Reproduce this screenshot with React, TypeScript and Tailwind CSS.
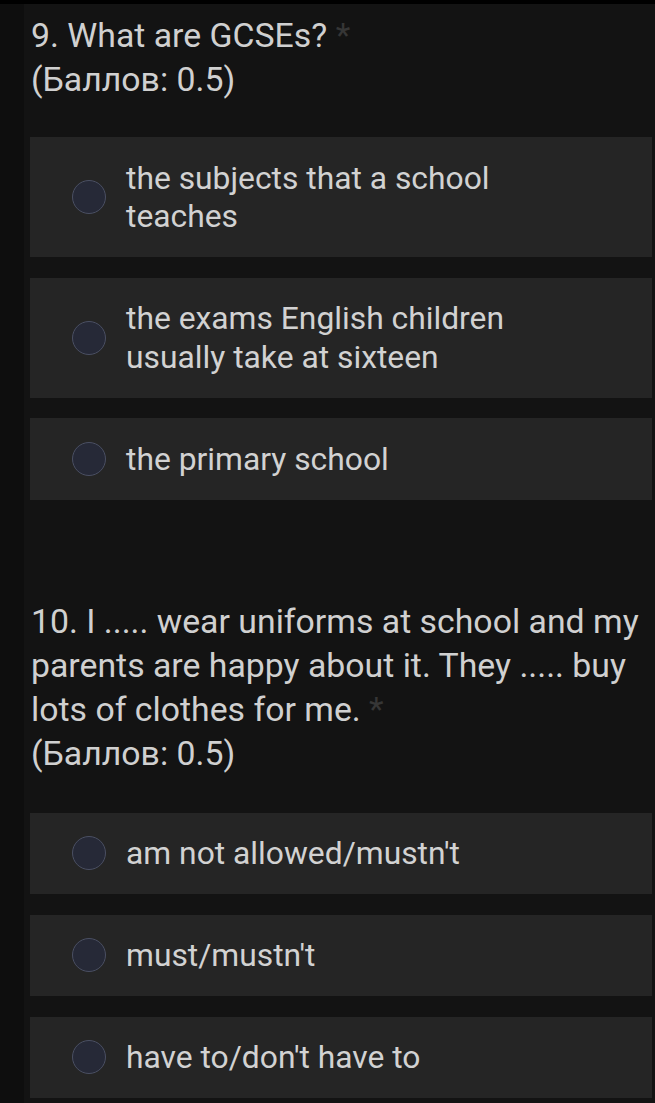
type Question = {
  title: string;
  options: string[];
};

const QUESTIONS: Question[] = [
  {
    title: "9. What are GCSEs?",
    options: [
      "the subjects that a school teaches",
      "the exams English children usually take at sixteen",
      "the primary school",
    ],
  },
  {
    title:
      "10. I ..... wear uniforms at school and my parents are happy about it. They ..... buy lots of clothes for me.",
    options: ["am not allowed/mustn't", "must/mustn't", "have to/don't have to"],
  },
];

function RadioOption({ label }: { label: string }) {
  return (
    <div className="flex items-center bg-[#252525] py-[21.5px] pl-[42px] pr-6">
      <span className="h-[34px] w-[34px] shrink-0 rounded-full border border-[#4a4f62] bg-[#262937]" />
      <span className="ml-[20px] max-w-[400px] text-[31.8px] leading-[38.5px] text-[#d2d2d2]">
        {label}
      </span>
    </div>
  );
}

export default function App() {
  return (
    <div
      className="min-h-[1103px] border-t-4 border-black bg-[#0e0e0e]"
      style={{ fontFamily: "Roboto, 'Noto Sans', sans-serif" }}
    >
      <div className="ml-[24px] min-h-[1099px] bg-[#131313] pl-[6px] pr-[3px]">
        {QUESTIONS.map((q, i) => (
          <div key={i} className={i === 0 ? "pt-[10px]" : "pt-[100px]"}>
            <div className="pl-[1px] text-[33.8px] leading-[44px] text-[#d0d0d0]">
              <p>
                {q.title} <span className="text-[#363636]">*</span>
              </p>
              <p>(Баллов: 0.5)</p>
            </div>
            <div
              className={`flex flex-col gap-[20.5px] ${i === 0 ? "mt-[35px]" : "mt-[37px]"}`}
            >
              {q.options.map((opt) => (
                <RadioOption key={opt} label={opt} />
              ))}
            </div>
          </div>
        ))}
      </div>
    </div>
  );
}
